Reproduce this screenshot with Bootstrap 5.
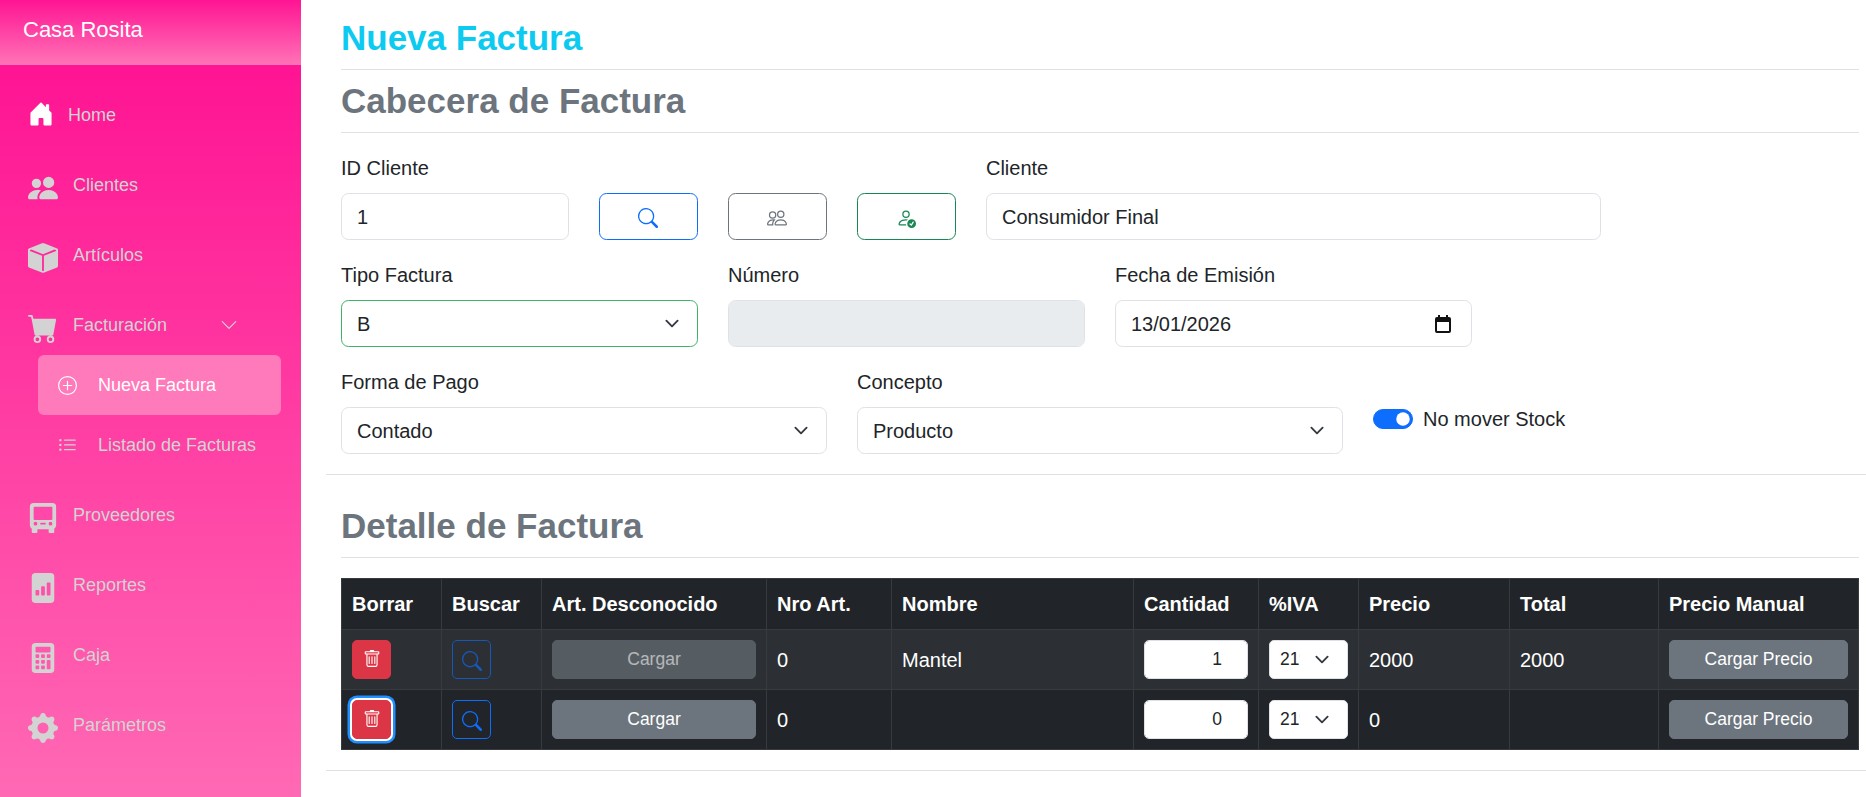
<!DOCTYPE html>
<html lang="es">
<head>
<meta charset="UTF-8" />
<meta name="viewport" content="width=device-width, initial-scale=1.0" />
<link rel="stylesheet" href="https://cdn.jsdelivr.net/npm/bootstrap@5.3.3/dist/css/bootstrap.min.css" />
<title>Nueva Factura</title>
<style>
  html { font-size: 20px; }
  body { font-family: "Liberation Sans", Arial, sans-serif; overflow: hidden; }
  .sidebar { width: 301px; min-height: 797px; }
  .sidebar-head { height: 65px; padding: 13px 23px; font-size: 22px; color: #fff; background: linear-gradient(to bottom, #ff1493, #ff73b6); }
  .side-nav { padding-top: 15px; font-size: 18px; background: linear-gradient(to bottom, #ff1493, #ff69b4); }
  .side-link { height: 70px; padding-left: 28px; color: #d3d3d3; text-decoration: none; }
  .side-link svg { margin-top: 6px; width: 30px; height: 30px; margin-right: 15px; flex: none; }
  .side-link.home svg { margin-top: -3px; width: 26px; height: 26px; margin-right: 14px; color: #fff; }
  .side-link.fact { margin-bottom: -5px; }
  .side-link .chev { width: 18px; height: 18px; margin: 0 63px 0 auto; }
  .side-sub { height: 60px; margin-left: 38px; width: 243px; padding-left: 20px; color: #d3d3d3; text-decoration: none; border-radius: 6px; }
  .side-sub svg { width: 19px; height: 19px; margin-right: 21px; flex: none; }
  .side-sub.active { color: #fff; background: #ff7aba; }
  .side-gap { height: 5px; }
  .main { min-width: 0; padding: 17px 7px 0 40px; overflow: hidden; }
  .main .row { --bs-gutter-x: 30px; }
  .main h3 { font-weight: 700; }
  hr { color: #dee2e6; opacity: 1; }
  .hr-top { margin: 0 0 10px; }
  .hr-head { margin: 0 0 20px; }
  .hr-sep { margin: 0 -7px 20px -15px; }
  .hr-sep.top-pad { margin-bottom: 30px; }
  .form-select, .form-select-sm { background-size: 20px 15px; }
  .form-select-sm { padding-right: 47px; }
  .select-ok { border-color: #3fb26a; }
  .date-input {
    background-image: url("data:image/svg+xml,%3csvg xmlns='http://www.w3.org/2000/svg' viewBox='0 0 16 18'%3e%3cpath fill='%23111' fill-rule='evenodd' d='M3 0h2v2h6V0h2v2h1a2 2 0 0 1 2 2v12a2 2 0 0 1-2 2H2a2 2 0 0 1-2-2V4a2 2 0 0 1 2-2h1zM2 7v9h12V7z'/%3e%3c/svg%3e");
    background-repeat: no-repeat;
    background-position: right 20px center;
    background-size: 16px 18px;
  }
  .btn-icon { height: 47px; }
  .btn-icon svg { width: 20px; height: 20px; }
  .switch-col { padding-top: 37px; }
  .grid { table-layout: fixed; width: 1518px; margin-bottom: 20px; }
  .grid th, .grid td { vertical-align: middle; }
  .grid td { height: 60px; }
  .grid th { height: 51px; }
  .grid .btn { height: 39px; font-size: 17.5px; }
  .grid .btn svg { width: 20px; height: 20px; }
  .grid .btn-danger svg { width: 18px; height: 18px; margin-top: -3px; }
  .square { width: 39px; padding: 0; }
  .focused-btn { box-shadow: 0 0 0 2px #fff, 0 0 0 4.5px #1e90ff; }
  .grid .form-control-sm, .grid .form-select-sm { height: 39px; }
  .w-borrar, .w-buscar { width: 100px; }
  .w-art { width: 225px; }
  .w-nro { width: 125px; }
  .w-nombre { width: 242px; }
  .w-cant { width: 125px; }
  .w-iva { width: 100px; }
  .w-precio { width: 151px; }
  .w-total { width: 149px; }
</style>
</head>
<body>
<div class="d-flex">
  <aside class="sidebar d-flex flex-column flex-shrink-0">
    <div class="sidebar-head">Casa Rosita</div>
    <nav class="side-nav d-flex flex-column flex-grow-1">
      <a href="#" class="side-link home d-flex align-items-center">
        <svg viewBox="0 0 16 16" fill="currentColor"><path d="M6.5 14.5v-3.505c0-.245.25-.495.5-.495h2c.25 0 .5.25.5.5v3.5a.5.5 0 0 0 .5.5h4a.5.5 0 0 0 .5-.5v-7a.5.5 0 0 0-.146-.354L13 5.793V2.5a.5.5 0 0 0-.5-.5h-1a.5.5 0 0 0-.5.5v1.293L8.354 1.146a.5.5 0 0 0-.708 0l-6 6A.5.5 0 0 0 1.5 7.5v7a.5.5 0 0 0 .5.5h4a.5.5 0 0 0 .5-.5"/></svg>
        Home
      </a>
      <a href="#" class="side-link d-flex align-items-center">
        <svg viewBox="0 0 16 16" fill="currentColor"><path d="M7 14s-1 0-1-1 1-4 5-4 5 3 5 4-1 1-1 1zm4-6a3 3 0 1 0 0-6 3 3 0 0 0 0 6m-5.784 6A2.24 2.24 0 0 1 5 13c0-1.355.68-2.75 1.936-3.72A6.3 6.3 0 0 0 5 9c-4 0-5 3-5 4s1 1 1 1zM4.5 8a2.5 2.5 0 1 0 0-5 2.5 2.5 0 0 0 0 5"/></svg>
        Clientes
      </a>
      <a href="#" class="side-link d-flex align-items-center">
        <svg viewBox="0 0 16 16" fill="currentColor"><path fill-rule="evenodd" d="M15.528 2.973a.75.75 0 0 1 .472.696v8.662a.75.75 0 0 1-.472.696l-7.25 2.9a.75.75 0 0 1-.557 0l-7.25-2.9A.75.75 0 0 1 0 12.331V3.669a.75.75 0 0 1 .471-.696L7.443.184l.004-.001.274-.11a.75.75 0 0 1 .558 0l.274.11.004.001zm-1.374.527L8 5.962 1.846 3.5 1 3.839v.4l6.5 2.6v7.922l.5.2.5-.2V6.84l6.5-2.6v-.4l-.846-.339Z"/></svg>
        Artículos
      </a>
      <a href="#" class="side-link fact d-flex align-items-center">
        <svg viewBox="0 0 16 16" fill="currentColor"><path d="M0 1.5A.5.5 0 0 1 .5 1H2a.5.5 0 0 1 .485.379L2.89 3H14.5a.5.5 0 0 1 .491.592l-1.5 8A.5.5 0 0 1 13 12H4a.5.5 0 0 1-.491-.408L2.01 3.607 1.61 2H.5a.5.5 0 0 1-.5-.5M5 12a2 2 0 1 0 0 4 2 2 0 0 0 0-4m7 0a2 2 0 1 0 0 4 2 2 0 0 0 0-4m-7 1a1 1 0 1 1 0 2 1 1 0 0 1 0-2m7 0a1 1 0 1 1 0 2 1 1 0 0 1 0-2"/></svg>
        Facturación
        <svg class="chev" viewBox="0 0 16 16" fill="currentColor"><path fill-rule="evenodd" d="M1.646 4.646a.5.5 0 0 1 .708 0L8 10.293l5.646-5.647a.5.5 0 0 1 .708.708l-6 6a.5.5 0 0 1-.708 0l-6-6a.5.5 0 0 1 0-.708"/></svg>
      </a>
      <a href="#" class="side-sub active d-flex align-items-center">
        <svg viewBox="0 0 16 16" fill="currentColor"><path d="M8 15A7 7 0 1 1 8 1a7 7 0 0 1 0 14m0 1A8 8 0 1 0 8 0a8 8 0 0 0 0 16"/><path d="M8 4a.5.5 0 0 1 .5.5v3h3a.5.5 0 0 1 0 1h-3v3a.5.5 0 0 1-1 0v-3h-3a.5.5 0 0 1 0-1h3v-3A.5.5 0 0 1 8 4"/></svg>
        Nueva Factura
      </a>
      <a href="#" class="side-sub d-flex align-items-center">
        <svg viewBox="0 0 16 16" fill="currentColor"><path fill-rule="evenodd" d="M5 11.5a.5.5 0 0 1 .5-.5h9a.5.5 0 0 1 0 1h-9a.5.5 0 0 1-.5-.5m0-4a.5.5 0 0 1 .5-.5h9a.5.5 0 0 1 0 1h-9a.5.5 0 0 1-.5-.5m0-4a.5.5 0 0 1 .5-.5h9a.5.5 0 0 1 0 1h-9a.5.5 0 0 1-.5-.5m-3 1a1 1 0 1 0 0-2 1 1 0 0 0 0 2m0 4a1 1 0 1 0 0-2 1 1 0 0 0 0 2m0 4a1 1 0 1 0 0-2 1 1 0 0 0 0 2"/></svg>
        Listado de Facturas
      </a>
      <div class="side-gap"></div>
      <a href="#" class="side-link d-flex align-items-center">
        <svg viewBox="0 0 16 16" fill="currentColor"><path fill-rule="evenodd" d="M3 0h10a2 2 0 0 1 2 2v10a2 2 0 0 1-1 1.7v1.8a.5.5 0 0 1-.5.5h-2a.5.5 0 0 1-.5-.5V14H5v1.5a.5.5 0 0 1-.5.5h-2a.5.5 0 0 1-.5-.5v-1.8A2 2 0 0 1 1 12V2a2 2 0 0 1 2-2zm.5 2a.5.5 0 0 0-.5.5v6a.5.5 0 0 0 .5.5h9a.5.5 0 0 0 .5-.5v-6a.5.5 0 0 0-.5-.5zM3 11a1 1 0 0 0 2 0 1 1 0 0 0-2 0m8 0a1 1 0 0 0 2 0 1 1 0 0 0-2 0m-4-.5a.5.5 0 0 0 0 1h2a.5.5 0 0 0 0-1z"/></svg>
        Proveedores
      </a>
      <a href="#" class="side-link d-flex align-items-center">
        <svg viewBox="0 0 16 16" fill="currentColor"><path d="M12 0H4a2 2 0 0 0-2 2v12a2 2 0 0 0 2 2h8a2 2 0 0 0 2-2V2a2 2 0 0 0-2-2m-2 11.5v-6a.5.5 0 0 1 .5-.5h1a.5.5 0 0 1 .5.5v6a.5.5 0 0 1-.5.5h-1a.5.5 0 0 1-.5-.5m-2.5.5a.5.5 0 0 1-.5-.5v-4a.5.5 0 0 1 .5-.5h1a.5.5 0 0 1 .5.5v4a.5.5 0 0 1-.5.5zm-3 0a.5.5 0 0 1-.5-.5v-2a.5.5 0 0 1 .5-.5h1a.5.5 0 0 1 .5.5v2a.5.5 0 0 1-.5.5z"/></svg>
        Reportes
      </a>
      <a href="#" class="side-link d-flex align-items-center">
        <svg viewBox="0 0 16 16" fill="currentColor"><path d="M2 2a2 2 0 0 1 2-2h8a2 2 0 0 1 2 2v12a2 2 0 0 1-2 2H4a2 2 0 0 1-2-2zm2 .5v2a.5.5 0 0 0 .5.5h7a.5.5 0 0 0 .5-.5v-2a.5.5 0 0 0-.5-.5h-7a.5.5 0 0 0-.5.5m0 4v1a.5.5 0 0 0 .5.5h1a.5.5 0 0 0 .5-.5v-1a.5.5 0 0 0-.5-.5h-1a.5.5 0 0 0-.5.5M4.5 9a.5.5 0 0 0-.5.5v1a.5.5 0 0 0 .5.5h1a.5.5 0 0 0 .5-.5v-1a.5.5 0 0 0-.5-.5zM4 12.5v1a.5.5 0 0 0 .5.5h1a.5.5 0 0 0 .5-.5v-1a.5.5 0 0 0-.5-.5h-1a.5.5 0 0 0-.5.5M7.5 6a.5.5 0 0 0-.5.5v1a.5.5 0 0 0 .5.5h1a.5.5 0 0 0 .5-.5v-1a.5.5 0 0 0-.5-.5zM7 9.5v1a.5.5 0 0 0 .5.5h1a.5.5 0 0 0 .5-.5v-1a.5.5 0 0 0-.5-.5h-1a.5.5 0 0 0-.5.5m.5 2.5a.5.5 0 0 0-.5.5v1a.5.5 0 0 0 .5.5h1a.5.5 0 0 0 .5-.5v-1a.5.5 0 0 0-.5-.5zM10 6.5v1a.5.5 0 0 0 .5.5h1a.5.5 0 0 0 .5-.5v-1a.5.5 0 0 0-.5-.5h-1a.5.5 0 0 0-.5.5m.5 2.5a.5.5 0 0 0-.5.5v4a.5.5 0 0 0 .5.5h1a.5.5 0 0 0 .5-.5v-4a.5.5 0 0 0-.5-.5z"/></svg>
        Caja
      </a>
      <a href="#" class="side-link d-flex align-items-center">
        <svg viewBox="0 0 16 16" fill="currentColor"><path d="M9.405 1.05c-.413-1.4-2.397-1.4-2.81 0l-.1.34a1.464 1.464 0 0 1-2.105.872l-.31-.17c-1.283-.698-2.686.705-1.987 1.987l.169.311c.446.82.023 1.841-.872 2.105l-.34.1c-1.4.413-1.4 2.397 0 2.81l.34.1a1.464 1.464 0 0 1 .872 2.105l-.17.31c-.698 1.283.705 2.686 1.987 1.987l.311-.169a1.464 1.464 0 0 1 2.105.872l.1.34c.413 1.4 2.397 1.4 2.81 0l.1-.34a1.464 1.464 0 0 1 2.105-.872l.31.17c1.283.698 2.686-.705 1.987-1.987l-.169-.311a1.464 1.464 0 0 1 .872-2.105l.34-.1c1.4-.413 1.4-2.397 0-2.81l-.34-.1a1.464 1.464 0 0 1-.872-2.105l.17-.31c.698-1.283-.705-2.686-1.987-1.987l-.311.169a1.464 1.464 0 0 1-2.105-.872zM8 10.93a2.929 2.929 0 1 1 0-5.86 2.929 2.929 0 0 1 0 5.858z"/></svg>
        Parámetros
      </a>
    </nav>
  </aside>

  <main class="main flex-grow-1">
    <h3 class="text-info">Nueva Factura</h3>
    <hr class="hr-top" />
    <h3 class="text-secondary">Cabecera de Factura</h3>
    <hr class="hr-head" />

    <div class="row">
      <div class="col-2 mb-3">
        <label class="form-label">ID Cliente</label>
        <input type="text" class="form-control" value="1" />
      </div>
      <div class="col-1 mb-3 d-flex align-items-end">
        <button type="button" class="btn btn-outline-primary btn-icon w-100">
          <svg viewBox="0 0 16 16" fill="currentColor"><path d="M11.742 10.344a6.5 6.5 0 1 0-1.397 1.398h-.001q.044.06.098.115l3.85 3.85a1 1 0 0 0 1.415-1.414l-3.85-3.85a1 1 0 0 0-.115-.1zM12 6.5a5.5 5.5 0 1 1-11 0 5.5 5.5 0 0 1 11 0"/></svg>
        </button>
      </div>
      <div class="col-1 mb-3 d-flex align-items-end">
        <button type="button" class="btn btn-outline-secondary btn-icon w-100">
          <svg viewBox="0 0 16 16" fill="currentColor"><path d="M15 14s1 0 1-1-1-4-5-4-5 3-5 4 1 1 1 1zm-7.978-1L7 12.996c.001-.264.167-1.03.76-1.72C8.312 10.629 9.282 10 11 10c1.717 0 2.687.63 3.24 1.276.593.69.758 1.457.76 1.72l-.008.002-.014.002zM11 7a2 2 0 1 0 0-4 2 2 0 0 0 0 4m3-2a3 3 0 1 1-6 0 3 3 0 0 1 6 0M6.936 9.28a6 6 0 0 0-1.23-.247A7 7 0 0 0 5 9c-4 0-5 3-5 4q0 1 1 1h4.216A2.24 2.24 0 0 1 5 13c0-1.01.377-2.042 1.09-2.904.243-.294.526-.569.846-.816M4.92 10A5.5 5.5 0 0 0 4 13H1c0-.26.164-1.03.76-1.724.545-.636 1.492-1.256 3.16-1.275ZM1.5 5.5a3 3 0 1 1 6 0 3 3 0 0 1-6 0m3-2a2 2 0 1 0 0 4 2 2 0 0 0 0-4"/></svg>
        </button>
      </div>
      <div class="col-1 mb-3 d-flex align-items-end">
        <button type="button" class="btn btn-outline-success btn-icon w-100">
          <svg viewBox="0 0 16 16" fill="currentColor"><path d="M12.5 16a3.5 3.5 0 1 0 0-7 3.5 3.5 0 0 0 0 7m1.679-4.493-1.335 2.226a.75.75 0 0 1-1.174.144l-.774-.773a.5.5 0 0 1 .708-.708l.547.548 1.17-1.951a.5.5 0 1 1 .858.514M11 5a3 3 0 1 1-6 0 3 3 0 0 1 6 0M8 7a2 2 0 1 0 0-4 2 2 0 0 0 0 4"/><path d="M8.256 14a4.5 4.5 0 0 1-.229-1.004H3c.001-.246.154-.986.832-1.664C4.484 10.68 5.711 10 8 10q.39 0 .74.025c.226-.341.496-.65.804-.918Q8.844 9.002 8 9c-5 0-6 3-6 4s1 1 1 1z"/></svg>
        </button>
      </div>
      <div class="col-5 mb-3">
        <label class="form-label">Cliente</label>
        <input type="text" class="form-control" value="Consumidor Final" />
      </div>
    </div>

    <div class="row">
      <div class="col-3 mb-3">
        <label class="form-label">Tipo Factura</label>
        <select class="form-select select-ok"><option>B</option></select>
      </div>
      <div class="col-3 mb-3">
        <label class="form-label">Número</label>
        <input type="text" class="form-control" disabled />
      </div>
      <div class="col-3 mb-3">
        <label class="form-label">Fecha de Emisión</label>
        <input type="text" class="form-control date-input" value="13/01/2026" />
      </div>
    </div>

    <div class="row">
      <div class="col-4 mb-3">
        <label class="form-label">Forma de Pago</label>
        <select class="form-select"><option>Contado</option></select>
      </div>
      <div class="col-4 mb-3">
        <label class="form-label">Concepto</label>
        <select class="form-select"><option>Producto</option></select>
      </div>
      <div class="col-4 mb-3 switch-col">
        <div class="form-check form-switch">
          <input class="form-check-input" type="checkbox" id="noStock" checked />
          <label class="form-check-label" for="noStock">No mover Stock</label>
        </div>
      </div>
    </div>

    <hr class="hr-sep top-pad" />
    <h3 class="text-secondary">Detalle de Factura</h3>
    <hr class="hr-head" />

    <table class="table table-dark table-striped table-bordered grid">
      <colgroup>
        <col class="w-borrar" /><col class="w-buscar" /><col class="w-art" /><col class="w-nro" /><col class="w-nombre" />
        <col class="w-cant" /><col class="w-iva" /><col class="w-precio" /><col class="w-total" /><col />
      </colgroup>
      <thead>
        <tr>
          <th>Borrar</th><th>Buscar</th><th>Art. Desconocido</th><th>Nro Art.</th><th>Nombre</th>
          <th>Cantidad</th><th>%IVA</th><th>Precio</th><th>Total</th><th>Precio Manual</th>
        </tr>
      </thead>
      <tbody>
        <tr>
          <td><button type="button" class="btn btn-danger btn-sm square">
            <svg viewBox="0 0 16 16" fill="currentColor"><path d="M5.5 5.5A.5.5 0 0 1 6 6v6a.5.5 0 0 1-1 0V6a.5.5 0 0 1 .5-.5m2.5 0a.5.5 0 0 1 .5.5v6a.5.5 0 0 1-1 0V6a.5.5 0 0 1 .5-.5m3 .5a.5.5 0 0 0-1 0v6a.5.5 0 0 0 1 0z"/><path d="M14.5 3a1 1 0 0 1-1 1H13v9a2 2 0 0 1-2 2H5a2 2 0 0 1-2-2V4h-.5a1 1 0 0 1-1-1V2a1 1 0 0 1 1-1H6a1 1 0 0 1 1-1h2a1 1 0 0 1 1 1h3.5a1 1 0 0 1 1 1zM4.118 4 4 4.059V13a1 1 0 0 0 1 1h6a1 1 0 0 0 1-1V4.059L11.882 4zM2.5 3h11V2h-11z"/></svg>
          </button></td>
          <td><button type="button" class="btn btn-outline-primary btn-sm square" disabled>
            <svg viewBox="0 0 16 16" fill="currentColor"><path d="M11.742 10.344a6.5 6.5 0 1 0-1.397 1.398h-.001q.044.06.098.115l3.85 3.85a1 1 0 0 0 1.415-1.414l-3.85-3.85a1 1 0 0 0-.115-.1zM12 6.5a5.5 5.5 0 1 1-11 0 5.5 5.5 0 0 1 11 0"/></svg>
          </button></td>
          <td><button type="button" class="btn btn-secondary btn-sm w-100" disabled>Cargar</button></td>
          <td>0</td>
          <td>Mantel</td>
          <td><input type="number" class="form-control form-control-sm text-end" value="1" /></td>
          <td><select class="form-select form-select-sm"><option>21%</option></select></td>
          <td>2000</td>
          <td>2000</td>
          <td><button type="button" class="btn btn-secondary btn-sm w-100">Cargar Precio</button></td>
        </tr>
        <tr>
          <td><button type="button" class="btn btn-danger btn-sm square focused-btn">
            <svg viewBox="0 0 16 16" fill="currentColor"><path d="M5.5 5.5A.5.5 0 0 1 6 6v6a.5.5 0 0 1-1 0V6a.5.5 0 0 1 .5-.5m2.5 0a.5.5 0 0 1 .5.5v6a.5.5 0 0 1-1 0V6a.5.5 0 0 1 .5-.5m3 .5a.5.5 0 0 0-1 0v6a.5.5 0 0 0 1 0z"/><path d="M14.5 3a1 1 0 0 1-1 1H13v9a2 2 0 0 1-2 2H5a2 2 0 0 1-2-2V4h-.5a1 1 0 0 1-1-1V2a1 1 0 0 1 1-1H6a1 1 0 0 1 1-1h2a1 1 0 0 1 1 1h3.5a1 1 0 0 1 1 1zM4.118 4 4 4.059V13a1 1 0 0 0 1 1h6a1 1 0 0 0 1-1V4.059L11.882 4zM2.5 3h11V2h-11z"/></svg>
          </button></td>
          <td><button type="button" class="btn btn-outline-primary btn-sm square">
            <svg viewBox="0 0 16 16" fill="currentColor"><path d="M11.742 10.344a6.5 6.5 0 1 0-1.397 1.398h-.001q.044.06.098.115l3.85 3.85a1 1 0 0 0 1.415-1.414l-3.85-3.85a1 1 0 0 0-.115-.1zM12 6.5a5.5 5.5 0 1 1-11 0 5.5 5.5 0 0 1 11 0"/></svg>
          </button></td>
          <td><button type="button" class="btn btn-secondary btn-sm w-100">Cargar</button></td>
          <td>0</td>
          <td></td>
          <td><input type="number" class="form-control form-control-sm text-end" value="0" /></td>
          <td><select class="form-select form-select-sm"><option>21%</option></select></td>
          <td>0</td>
          <td></td>
          <td><button type="button" class="btn btn-secondary btn-sm w-100">Cargar Precio</button></td>
        </tr>
      </tbody>
    </table>
    <hr class="hr-sep" />
  </main>
</div>
<script src="https://cdn.jsdelivr.net/npm/bootstrap@5.3.3/dist/js/bootstrap.bundle.min.js"></script>
</body>
</html>
